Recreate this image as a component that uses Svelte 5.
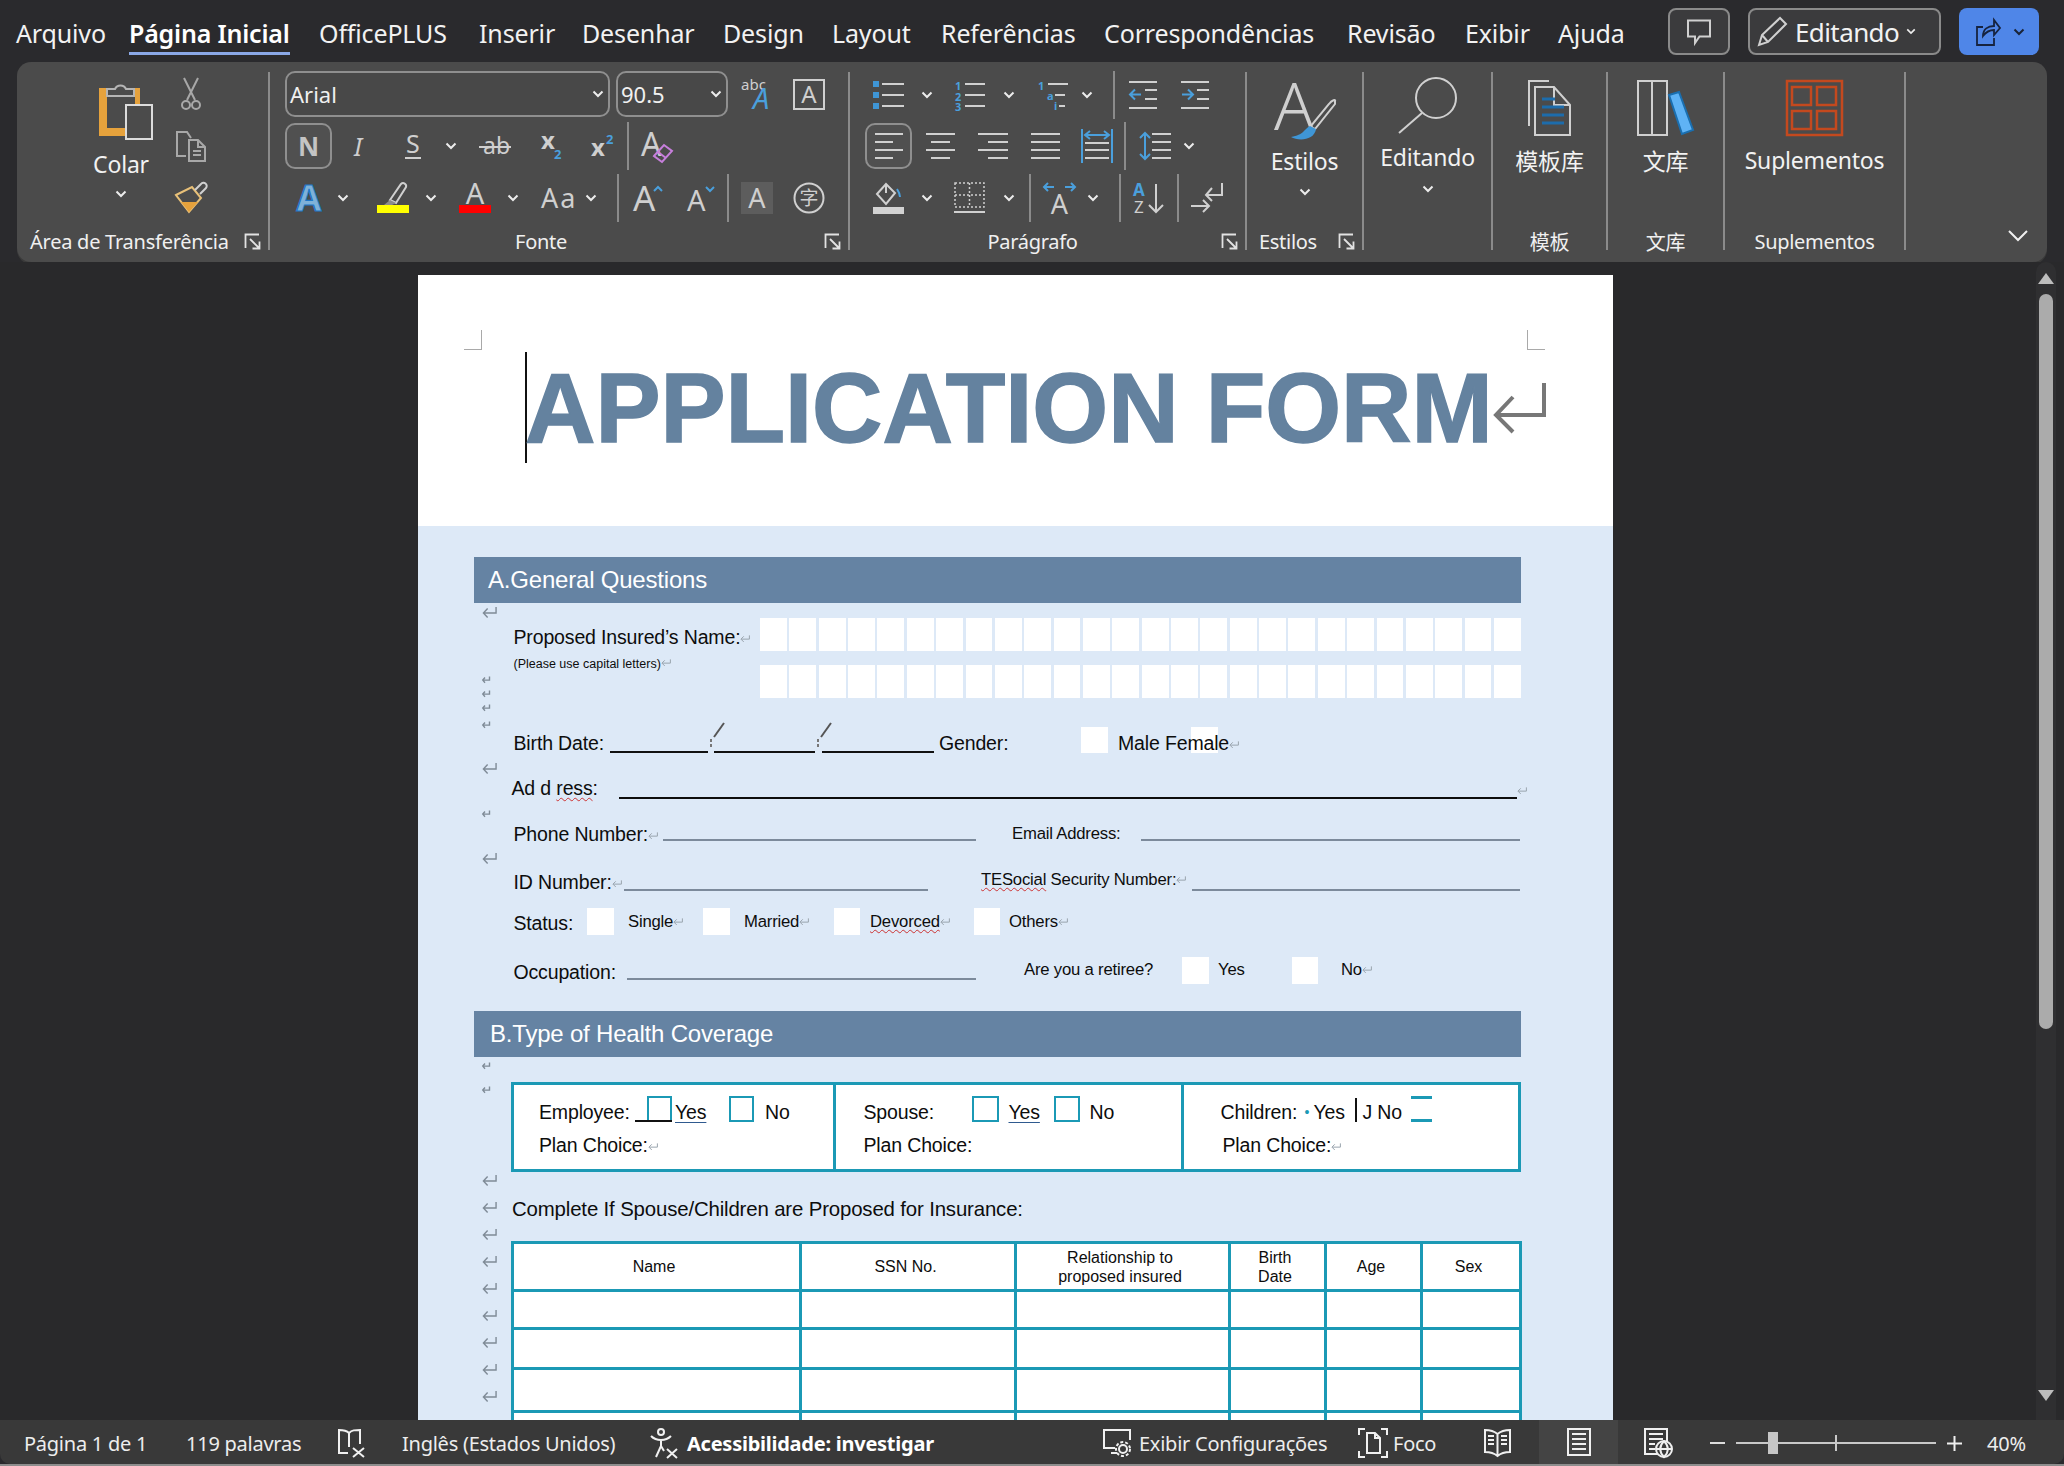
<script>
  const tabs = ['Arquivo', 'Página Inicial', 'OfficePLUS', 'Inserir', 'Desenhar', 'Design', 'Layout', 'Referências', 'Correspondências', 'Revisão', 'Exibir', 'Ajuda'];
  const cells = Array.from({ length: 26 }, (_, i) => i);

  function stack(y0, list) {
    let prev = y0;
    return list.map(([y, big]) => {
      const h = big ? 12 : 7;
      const w = big ? 15 : 8;
      const top = y - h / 2 - prev;
      prev = y + h / 2;
      return { h, w, top };
    });
  }
  const marksA = stack(602, [[611, 1], [678, 0], [692, 0], [706, 0], [723, 0], [767, 1], [812, 0], [857, 1]]);
  const marksB = stack(1057, [[1065, 0], [1089, 0], [1180, 1], [1207, 1], [1234, 1], [1261, 1], [1288, 1], [1315, 1], [1342, 1], [1369, 1], [1396, 1]]);
  const tableRows = [38, 40, 43, 40];
</script>

{#snippet chev()}
  <svg class="chev" width="12" height="8" viewBox="0 0 12 8"><path d="M1.5 1.5L6 6l4.5-4.5" /></svg>
{/snippet}
{#snippet launcher()}
  <svg class="launch" width="17" height="17" viewBox="0 0 17 17"><path d="M1.5 15V1.5H15M6 6l9.5 9.5M15.5 8.5v7H8.5" /></svg>
{/snippet}
{#snippet ret()}
  <svg class="ret" width="10" height="9" viewBox="0 0 16 12"><path d="M15 1v6H2M6 2.5L1.5 7 6 11.5" /></svg>
{/snippet}
{#snippet vsep()}
  <i class="vsep"></i>
{/snippet}

<div class="app">
  <header class="top">
    <nav class="tabs">
      {#each tabs as t, i}
        <span class="tab" class:active={i === 1}>{t}</span>
      {/each}
    </nav>
    <div class="actions">
      <div class="btn comment">
        <svg width="24" height="26" viewBox="0 0 24 26"><path class="s" d="M1 1.5h22v16H12.500L8 24v-6.500H1z" /></svg>
      </div>
      <div class="btn editing">
        <svg width="31" height="31" viewBox="0 0 31 31"><path class="s" d="M2 29l3-10L23 2l6 6-18 18zM5 19l6 7" /></svg>
        <span>Editando</span>
        <svg class="chev tiny" width="10" height="7" viewBox="0 0 12 8"><path d="M1.5 1.500L6 6l4.500-4.500" /></svg>
      </div>
      <div class="btn share">
        <svg width="26" height="30" viewBox="0 0 26 30"><path class="dk" d="M8 10H2v18h17v-7M8 19c0-7 5-10 11-10V3l6 8-6 7v-5c-5 0-8 2-11 6z" /></svg>
        {@render chev()}
      </div>
    </div>
  </header>

  <section class="ribbon">
    <div class="group g-clip">
      <div class="clip-body">
        <div class="large colar">
          <svg class="paste" width="54" height="60" viewBox="0 0 54 60">
            <path class="or" d="M0 8h8v40h24v8H0zM36 8h5v17h-5z" />
            <path class="clipt" d="M8 16V9h8a6 6 0 0 1 11 0h8v7z" />
            <rect class="paper" x="27" y="25" width="26" height="34" />
          </svg>
          <span class="big-label">Colar</span>
          {@render chev()}
        </div>
        <div class="clip-small">
          <svg width="20" height="32" viewBox="0 0 20 32"><path class="dim" d="M3 0l11 22M17 0L6 22" /><circle class="dim" cx="5" cy="27" r="4" /><circle class="dim" cx="15" cy="27" r="4" /></svg>
          <svg width="32" height="32" viewBox="0 0 32 32"><path class="dim" d="M11 26H2V2h10l4 6M14 10h9l7 7v14H14zM23 10v7h7M18 21h8M18 25h8" /></svg>
          <svg width="31" height="30" viewBox="0 0 31 30">
            <path class="brush" d="M0 13l16-8 9 11-12 14z" />
            <path class="or" d="M5 20h17l-9 10z" />
            <path class="s" d="M19 8l6-6a2.500 2.500 0 0 1 5 4l-6 6" />
          </svg>
        </div>
      </div>
      <div class="foot left-clip">Área de Transferência{@render launcher()}</div>
    </div>

    <div class="group g-font">
      <div class="rows">
        <div class="row r1 font-r1">
          <div class="combo"><span>Arial</span>{@render chev()}</div>
          <div class="combo"><span>90.5</span>{@render chev()}</div>
          <svg width="34" height="30" viewBox="0 0 34 30"><text class="t" x="0" y="11" font-size="15">abc</text><text class="bt it" x="12" y="30" font-size="29">A</text></svg>
          <svg width="32" height="31" viewBox="0 0 32 31"><rect class="s" x="1" y="1" width="30" height="29" /><text class="t" x="16" y="24" font-size="24" text-anchor="middle">A</text></svg>
        </div>
        <div class="row r2 font-r2">
          <div class="tog"><span class="bold-n">N</span></div>
          <svg width="12" height="24" viewBox="0 0 12 24"><text class="t it" x="0" y="22" font-size="25">I</text></svg>
          <svg width="16" height="26" viewBox="0 0 16 26"><text class="t" x="1" y="20" font-size="25">S</text><path class="s" d="M0 25h16" /></svg>
          {@render chev()}
          <svg width="32" height="24" viewBox="0 0 32 24"><text class="t" x="4" y="20" font-size="23">ab</text><path class="s" d="M0 13h32" /></svg>
          <svg width="22" height="28" viewBox="0 0 22 28"><text class="t strong" x="2" y="17" font-size="24">x</text><text class="bt strong" x="15" y="27" font-size="13">2</text></svg>
          <svg width="23" height="28" viewBox="0 0 23 28"><text class="t strong" x="0" y="24" font-size="24">x</text><text class="bt strong" x="15" y="12" font-size="13">2</text></svg>
          {@render vsep()}
          <svg width="34" height="32" viewBox="0 0 34 32"><text class="t" x="0" y="26" font-size="32">A</text><path class="pink" d="M13 26l10-11 8 6-10 11z M17 22l8 6" /></svg>
        </div>
        <div class="row r3 font-r3">
          <svg width="30" height="30" viewBox="0 0 30 30"><text class="outl" x="15" y="28" font-size="36" text-anchor="middle">A</text></svg>
          {@render chev()}
          <svg width="32" height="31" viewBox="0 0 32 31">
            <rect class="yl" x="0" y="23" width="32" height="8" />
            <path class="s" d="M13 18L24 2a3 3 0 0 1 5 3L19 21z" />
            <path class="mk" d="M13 18l6 3-4 2H7z" />
          </svg>
          {@render chev()}
          <svg width="32" height="31" viewBox="0 0 32 31"><text class="t" x="16" y="22" font-size="29" text-anchor="middle">A</text><rect class="rd" x="0" y="23" width="32" height="8" /></svg>
          {@render chev()}
          <svg width="33" height="22" viewBox="0 0 33 22"><text class="t" x="0" y="21" font-size="27" letter-spacing="2">Aa</text></svg>
          {@render chev()}
          {@render vsep()}
          <svg width="31" height="28" viewBox="0 0 31 28"><text class="t" x="0" y="27" font-size="35">A</text><path class="bs" d="M21 7l4-4 4 4" /></svg>
          <svg width="29" height="26" viewBox="0 0 29 26"><text class="t" x="0" y="26" font-size="29">A</text><path class="bs" d="M19 2l4 4 4-4" /></svg>
          {@render vsep()}
          <div class="shaded"><svg width="24" height="24" viewBox="0 0 24 24"><text class="t" x="12" y="22" font-size="27" text-anchor="middle">A</text></svg></div>
          <svg width="32" height="32" viewBox="0 0 32 32"><circle class="s" cx="16" cy="16" r="14.500" /><text class="t cjk" x="16" y="23" font-size="19" text-anchor="middle">字</text></svg>
        </div>
      </div>
      <div class="foot foot-font">Fonte{@render launcher()}</div>
    </div>

    <div class="group g-para">
      <div class="rows">
        <div class="row r1 para-r1">
          <svg width="31" height="30" viewBox="0 0 31 30"><path class="bf" d="M0 1h6v6H0zM0 12h6v6H0zM0 23h6v6H0z" /><path class="s" d="M9 4h22M9 15h22M9 26h22" /></svg>
          {@render chev()}
          <svg width="31" height="30" viewBox="0 0 31 30"><text class="bt strong" x="1" y="10" font-size="11">1</text><text class="bt strong" x="1" y="21" font-size="11">2</text><text class="bt strong" x="1" y="31" font-size="11">3</text><path class="s" d="M11 4h20M11 15h20M11 26h20" /></svg>
          {@render chev()}
          <svg width="31" height="30" viewBox="0 0 31 30"><text class="bt strong" x="1" y="10" font-size="11">1</text><text class="bt strong" x="10" y="20" font-size="11">a</text><text class="bt strong" x="17" y="30" font-size="11">i</text><path class="s" d="M11 4h20M18 15h10M22 26h6" /></svg>
          {@render chev()}
          {@render vsep()}
          <svg width="28" height="30" viewBox="0 0 28 30"><path class="s" d="M0 2h28M16 10h12M16 19h12M0 28h28" /><path class="b" d="M12 14.500H1M6 9.500l-5 5 5 5" /></svg>
          <svg width="28" height="30" viewBox="0 0 28 30"><path class="s" d="M0 2h28M16 10h12M16 19h12M0 28h28" /><path class="b" d="M1 14.500h11M7 9.500l5 5-5 5" /></svg>
        </div>
        <div class="row r2 para-r2">
          <div class="tog"><svg width="30" height="28" viewBox="0 0 30 28"><path class="s" d="M1 2h28M1 10h18M1 18h28M1 26h18" /></svg></div>
          <svg width="29" height="28" viewBox="0 0 29 28"><path class="s" d="M0 2h29M5 10h19M0 18h29M5 26h19" /></svg>
          <svg width="30" height="28" viewBox="0 0 30 28"><path class="s" d="M0 2h30M10 10h20M0 18h30M10 26h20" /></svg>
          <svg width="29" height="28" viewBox="0 0 29 28"><path class="s" d="M0 2h29M0 10h29M0 18h29M0 26h29" /></svg>
          <svg width="32" height="34" viewBox="0 0 32 34"><path class="b" d="M1 0v34M31 0v34M4 6h24M9 2L4 6l5 4M23 2l5 4-5 4" /><path class="s" d="M4 14h24M4 21h24M4 29h24" /></svg>
          {@render vsep()}
          <svg width="32" height="30" viewBox="0 0 32 30"><path class="b" d="M6 2v26M1 7l5-5 5 5M1 23l5 5 5-5" /><path class="s" d="M13 3h19M13 11h19M13 19h19M13 27h19" /></svg>
          {@render chev()}
        </div>
        <div class="row r3 para-r3">
          <svg width="31" height="32" viewBox="0 0 31 32"><path class="s" d="M4 12L13 2l9 9-9 11zM13 2v9" /><path class="b" d="M24 7c2 3 3 5 3 8" /><rect class="gr" x="0" y="25" width="31" height="7" /></svg>
          {@render chev()}
          <svg width="31" height="31" viewBox="0 0 31 31"><path class="dot" d="M1 1h29v24H1zM15.500 1v24M1 13h29" /><path class="s" d="M0 30h31" /></svg>
          {@render chev()}
          {@render vsep()}
          <svg width="33" height="32" viewBox="0 0 33 32"><path class="b" d="M1 5h10M5 1L1 5l4 4M22 5h10M28 1l4 4-4 4" /><text class="t" x="16.500" y="32" font-size="27" text-anchor="middle">A</text></svg>
          {@render chev()}
          {@render vsep()}
          <svg width="32" height="32" viewBox="0 0 32 32"><text class="bt strong" x="0" y="14" font-size="17">A</text><text class="t" x="1" y="31" font-size="17">Z</text><path class="s" d="M23 2v28M16 23l7 7 7-7" /></svg>
          {@render vsep()}
          <svg width="32" height="32" viewBox="0 0 32 32"><path class="s" d="M31 1v12H15M21 6l-6 7 6 6M0 24h18M12 18l6 6-6 6" /></svg>
        </div>
      </div>
      <div class="foot foot-para">Parágrafo{@render launcher()}</div>
    </div>

    <div class="group g-est">
      <div class="large top11">
        <svg class="estilos-ic" width="61" height="57" viewBox="0 0 61 57">
          <text class="t thin" x="-2" y="47" font-size="66">A</text>
          <path class="s" d="M59 18c1-2-3-1-6 3L34 44l5 2 20-25z" />
          <path class="bf" d="M34 43c-6 3-6 9-19 11 7 4 23 4 25-8z" />
        </svg>
        <span class="big-label">Estilos</span>
        {@render chev()}
      </div>
      <div class="foot foot-est">Estilos{@render launcher()}</div>
    </div>

    <div class="group g-edit">
      <div class="large top5">
        <svg width="60" height="57" viewBox="0 0 60 57"><circle class="s" cx="38" cy="21" r="20" /><path class="s" d="M24 36L1 56" /></svg>
        <span class="big-label">Editando</span>
        {@render chev()}
      </div>
      <div class="foot"></div>
    </div>

    <div class="group g-temp">
      <div class="large top8">
        <svg width="44" height="56" viewBox="0 0 44 56">
          <path class="s" d="M1 46V1h20M7 7h19l16 18v30H7zM26 7v18h16" />
          <path class="navy" d="M14 19h13M14 27h22M14 35h22M14 43h22" />
        </svg>
        <span class="big-label cjk">模板库</span>
      </div>
      <div class="foot cjk">模板</div>
    </div>

    <div class="group g-lib">
      <div class="large top8">
        <svg width="57" height="56" viewBox="0 0 57 56">
          <path class="s" d="M1 1h29v54H1zM15 1v54" />
          <path class="bk" d="M32 15l10-3 14 38-11 4z" />
        </svg>
        <span class="big-label cjk">文库</span>
      </div>
      <div class="foot cjk">文库</div>
    </div>

    <div class="group g-add">
      <div class="large top8">
        <svg width="57" height="56" viewBox="0 0 57 56">
          <path class="rs" d="M1 1h55v54H1zM6 7h19v18H6zM31 7h19v18H31zM6 31h19v18H6zM31 31h19v18H31z" />
        </svg>
        <span class="big-label">Suplementos</span>
      </div>
      <div class="foot">Suplementos</div>
    </div>

    <div class="collapse">
      <svg width="20" height="12" viewBox="0 0 20 12"><path class="wh" d="M1 1l9 9 9-9" /></svg>
    </div>
  </section>

  <main class="docarea">
    <article class="page">
      <div class="page-head">
        <i class="crop crop-l"></i>
        <i class="crop crop-r"></i>
        <div class="title-row">
          <h1>APPLICATION FORM</h1>
          <svg width="54" height="49" viewBox="0 0 54 49"><path class="bigret" d="M52 0v32H6M21 14L4 32l17 17" /></svg>
        </div>
      </div>

      <div class="blue">
        <h2 class="sec">A.General Questions</h2>
        <div class="sec-body">
          <div class="marks ma">
            {#each marksA as m}
              <svg class="mark" width={m.w} height={m.h} viewBox="0 0 16 12" preserveAspectRatio="none" style="margin-top:{m.top}px"><path d="M15 1v6H2M6 2.500L1.500 7 6 11.500" /></svg>
            {/each}
          </div>
          <div class="form">
            <div class="f-name">
              <span class="tx pt7">Proposed Insured’s Name:{@render ret()}</span>
              <div class="cells">{#each cells as c (c)}<i></i>{/each}</div>
            </div>
            <div class="f-name2">
              <span class="small">(Please use capital letters){@render ret()}</span>
              <div class="cells">{#each cells as c (c)}<i></i>{/each}</div>
            </div>
            <div class="fr f-birth">
              <span class="tx">Birth Date:</span>
              <div class="date">
                <i class="seg s1"></i>
                <span class="slash"><svg width="14" height="30" viewBox="0 0 14 30"><path d="M13 0L3 14" /><path class="tick" d="M0 16v8" /></svg></span>
                <i class="seg s2"></i>
                <span class="slash"><svg width="14" height="30" viewBox="0 0 14 30"><path d="M13 0L3 14" /><path class="tick" d="M0 16v8" /></svg></span>
                <i class="seg s3"></i>
              </div>
              <i></i>
              <span class="tx">Gender:</span>
              <i class="box"></i>
              <i></i>
              <span class="tx mf"><span>Male Female</span>{@render ret()}</span>
            </div>
            <div class="fr f-addr">
              <span class="tx addr">Ad d <u class="sq">ress</u>:</span>
              <i class="ln blk"></i>
              <span class="tx">{@render ret()}</span>
            </div>
            <div class="fr f-phone">
              <span class="tx">Phone Number:{@render ret()}</span>
              <i class="ln m3"></i>
              <i></i>
              <span class="tx sm">Email Address:</span>
              <i class="ln m3"></i>
            </div>
            <div class="fr f-id">
              <span class="tx lift1">ID Number:{@render ret()}</span>
              <i class="ln m2"></i>
              <i></i>
              <span class="tx sm lift3"><u class="sq">TESocial</u> Security Number:{@render ret()}</span>
              <i class="ln m2"></i>
            </div>
            <div class="fr f-status">
              <span class="tx lift2">Status:</span>
              <i class="box tall"></i><i></i>
              <span class="tx sm lift3">Single{@render ret()}</span>
              <i class="box tall"></i><i></i>
              <span class="tx sm lift3">Married{@render ret()}</span>
              <i class="box tall"></i><i></i>
              <span class="tx sm lift3"><u class="sq">Devorced</u>{@render ret()}</span>
              <i class="box tall"></i><i></i>
              <span class="tx sm lift3">Others{@render ret()}</span>
            </div>
            <div class="fr f-occ">
              <span class="tx lift2">Occupation:</span>
              <i class="ln m4"></i>
              <i></i>
              <span class="tx sm lift4">Are you a retiree?</span>
              <i class="box tall"></i><i></i>
              <span class="tx sm lift4">Yes</span>
              <i class="box tall"></i><i></i>
              <span class="tx sm lift4">No{@render ret()}</span>
            </div>
          </div>
        </div>

        <h2 class="sec sec-b">B.Type of Health Coverage</h2>
        <div class="sec-body">
          <div class="marks mb">
            {#each marksB as m}
              <svg class="mark" width={m.w} height={m.h} viewBox="0 0 16 12" preserveAspectRatio="none" style="margin-top:{m.top}px"><path d="M15 1v6H2M6 2.500L1.500 7 6 11.500" /></svg>
            {/each}
          </div>
          <div class="form">
            <div class="plans">
              <div class="plan p1">
                <div class="pr pr1">
                  <span class="tx">Employee:</span>
                  <span class="ub"><i class="chk"></i></span>
                  <i></i>
                  <u class="tx yes">Yes</u>
                  <i></i>
                  <i class="chk"></i>
                  <i></i>
                  <span class="tx">No</span>
                </div>
                <div class="tx pc">Plan Choice:{@render ret()}</div>
              </div>
              <div class="plan p2">
                <div class="pr pr2">
                  <span class="tx">Spouse:</span>
                  <i class="chk"></i>
                  <i></i>
                  <u class="tx yes">Yes</u>
                  <i></i>
                  <i class="chk"></i>
                  <i></i>
                  <span class="tx">No</span>
                </div>
                <div class="tx pc">Plan Choice:</div>
              </div>
              <div class="plan p3">
                <div class="pr pr3">
                  <span class="tx">Children:</span>
                  <span class="tx dotm">•</span>
                  <span class="tx">Yes</span>
                  <i class="caret"></i>
                  <span class="tx">J No</span>
                  <i class="dash"></i>
                </div>
                <div class="tx pc pc3">Plan Choice:{@render ret()}</div>
              </div>
            </div>
            <p class="tx complete">Complete If Spouse/Children are Proposed for Insurance:</p>
            <table class="tbl">
              <colgroup><col class="c1" /><col class="c2" /><col class="c3" /><col class="c4" /><col class="c5" /><col class="c6" /></colgroup>
              <thead>
                <tr>
                  <th>Name</th><th>SSN No.</th><th>Relationship to<br />proposed insured</th><th>Birth<br />Date</th><th>Age</th><th>Sex</th>
                </tr>
              </thead>
              <tbody>
                {#each tableRows as h}
                  <tr style="height:{h}px"><td></td><td></td><td></td><td></td><td></td><td></td></tr>
                {/each}
              </tbody>
            </table>
          </div>
        </div>
      </div>
    </article>

    <aside class="scroll">
      <i class="arrow up"></i>
      <i class="thumb"></i>
      <i class="arrow down"></i>
    </aside>
  </main>

  <footer class="status">
    <span>Página 1 de 1</span>
    <span>119 palavras</span>
    <svg width="29" height="30" viewBox="0 0 29 30"><path class="wh1" d="M10 25H1V2c4 0 7 0 10 3 3-3 6-3 11-3v14M11 5v14M15 20l11 9M26 20l-11 9" /></svg>
    <span>Inglês (Estados Unidos)</span>
    <svg width="29" height="31" viewBox="0 0 29 31"><circle class="wh1" cx="11" cy="4" r="3" /><path class="wh1" d="M1 8c3 3 6 4 10 4s7-1 10-4M11 12v6M11 18l-5 11M11 18l3 5M17 21l10 9M27 21L17 30" /></svg>
    <b>Acessibilidade: investigar</b>
    <svg width="29" height="30" viewBox="0 0 29 30"><path class="wh1" d="M12 20H1V2h26v10M8 25h6" /><circle class="wh1" cx="20" cy="21" r="4" /><circle class="wh1 dashc" cx="20" cy="21" r="7" /></svg>
    <span>Exibir Configurações</span>
    <svg width="30" height="30" viewBox="0 0 30 30"><path class="wh1" d="M1 7V1h6M23 1h6v6M1 23v6h6M29 23v6h-6M9 5h8l5 5v15H9zM17 5v5h5" /></svg>
    <span>Foco</span>
    <svg width="27" height="28" viewBox="0 0 27 28"><path class="wh1" d="M13.500 5C10 2 6 1 1 1v22c5 0 9 1 12.500 4 3.500-3 7.500-4 12.500-4V1c-5 0-9 1-12.500 4zM13.500 5v22M4 7h6M4 11h6M4 15h6M17 7h6M17 11h6M17 15h6" /></svg>
    <div class="st-active"><svg width="24" height="28" viewBox="0 0 24 28"><path class="wh1" d="M1 1h22v26H1zM5 6h14M5 11h14M5 16h14M5 21h14" /></svg></div>
    <svg width="29" height="30" viewBox="0 0 29 30"><path class="wh1" d="M14 26H1V1h22v12M5 6h14M5 11h14M5 16h6M5 21h6" /><circle class="wh1" cx="20" cy="21" r="8" /><path class="wh1" d="M12 21h16M20 13c-5 5-5 11 0 16 5-5 5-11 0-16" /></svg>
    <i class="st-minus"></i>
    <div class="slider"><i class="knob"></i><i class="mid"></i></div>
    <svg width="15" height="15" viewBox="0 0 15 15"><path class="wh1" d="M0 7.500h15M7.500 0v15" /></svg>
    <span>40%</span>
  </footer>
  <div class="edge"></div>
</div>

<style>
  :global(body) { margin: 0; background: #2a2a2c; }
  .app {
    width: 2064px; height: 1466px; display: flex; flex-direction: column; overflow: hidden;
    background: #2a2a2d; font-family: "Noto Sans", "Noto Sans CJK SC", sans-serif; color: #f2f2f2;
  }
  i { display: block; font-style: normal; }
  svg { display: block; overflow: visible; }
  svg text { font-family: "Noto Sans", "Noto Sans CJK SC", sans-serif; }

  /* top bar */
  .top { height: 62px; flex: none; display: flex; }
  .tabs {
    display: grid; width: 1668px; box-sizing: border-box; padding-left: 16px; height: 55px;
    grid-template-columns: 113px 190px 160px 103px 141px 109px 109px 163px 243px 118px 93px 1fr;
  }
  .tab { font-size: 25px; height: 55px; padding-top: 11px; box-sizing: border-box; white-space: nowrap; justify-self: start; letter-spacing: -0.15px; line-height: 44px; }
  .tab.active { font-weight: 600; color: #fff; border-bottom: 3px solid #8aa8e6; width: 161px; letter-spacing: -0.2px; }
  .actions { display: flex; align-items: flex-start; padding-top: 8px; gap: 18px; }
  .btn { height: 47px; box-sizing: border-box; border-radius: 8px; display: flex; align-items: center; }
  .comment { width: 62px; border: 2px solid #8a8a8a; background: #3b3b3d; justify-content: center; }
  .editing { width: 193px; border: 2px solid #8a8a8a; background: #3b3b3d; padding-left: 7px; font-size: 26px; gap: 7px; }
  .editing span { letter-spacing: -0.6px; }
  .share { width: 80px; background: #4f86e8; padding-left: 16px; gap: 12px; }
  .share .chev path { stroke: #1a2438; }
  .s { fill: none; stroke: #d0d0d0; stroke-width: 2; }
  .dk { fill: none; stroke: #16233f; stroke-width: 1.8; }

  /* ribbon */
  .ribbon {
    flex: none; margin-left: 17px; width: 2030px; height: 200px; box-sizing: border-box; background: #4b4b4b;
    border-radius: 14px; display: flex; padding: 10px 0 12px; box-shadow: 0 2px 0 #3a3a3a;
  }
  .group { box-sizing: border-box; border-right: 2px solid #8b8b8b; display: flex; flex-direction: column; height: 178px; flex: none; }
  .g-clip { width: 253px; }
  .g-font { width: 580px; }
  .g-para { width: 397px; }
  .g-est { width: 117px; }
  .g-edit { width: 129px; }
  .g-temp { width: 115px; }
  .g-lib { width: 117px; }
  .g-add { width: 181px; }
  .foot {
    height: 16px; line-height: 16px; font-size: 20px; text-align: center; position: relative; flex: none; margin-top: auto;
    white-space: nowrap; color: #f0f0f0; letter-spacing: -0.3px;
  }
  .launch { position: absolute; right: 7px; bottom: 0; }
  .launch path { fill: none; stroke: #e2e2e2; stroke-width: 1.8; }
  .left-clip { text-align: left; padding-left: 13px; letter-spacing: -0.25px; }
  .foot-font { padding-right: 36px; }
  .foot-para { padding-right: 30px; }
  .foot-est { text-align: left; padding-left: 12px; }
  .chev { flex: none; }
  .chev path { fill: none; stroke: #ececec; stroke-width: 2; }
  .clip-body { display: flex; padding-left: 60px; }
  .large { display: flex; flex-direction: column; align-items: center; }
  .colar { width: 88px; padding-top: 8px; }
  .paste { margin-left: 10px; }
  .colar .big-label { margin-top: 12px; }
  .colar .chev { margin-top: 14px; }
  .big-label { font-size: 23px; line-height: 24px; white-space: nowrap; letter-spacing: -0.2px; }
  .clip-small { display: flex; flex-direction: column; align-items: center; width: 32px; margin-left: 10px; padding-top: 6px; gap: 20px; }
  .or { fill: #e6a23c; stroke: none; }
  .clipt { fill: #4b4b4b; stroke: #b5b5b5; stroke-width: 2; }
  .paper { fill: #4b4b4b; stroke: #dcdcdc; stroke-width: 2; }
  .dim { fill: none; stroke: #a8a8a8; stroke-width: 2; }
  .brush { fill: none; stroke: #e8c078; stroke-width: 2; }
  .t { fill: #cfcfcf; }
  .bt { fill: #4a9fdc; }
  .it { font-style: italic; }
  .strong { font-weight: 700; }
  .thin { font-weight: 300; }
  .b { fill: none; stroke: #4a9fdc; stroke-width: 2; }
  .bs { fill: none; stroke: #4a9fdc; stroke-width: 2; }
  .bf { fill: #3f96d6; }
  .pink { fill: none; stroke: #c77fdc; stroke-width: 2; }
  .yl { fill: #ffff00; }
  .rd { fill: #ff0000; }
  .mk { fill: #8c8c8c; }
  .gr { fill: #d2d2d2; }
  .dot { fill: none; stroke: #cfcfcf; stroke-width: 1.5; stroke-dasharray: 2 2; }
  .outl { fill: #7fb2d8; stroke: #1e78c8; stroke-width: 1.2; font-weight: 700; }
  .navy { fill: none; stroke: #1d6cab; stroke-width: 3; }
  .bk { fill: #5fb3f5; stroke: #1a6fb0; stroke-width: 2; }
  .rs { fill: none; stroke: #c4491e; stroke-width: 2.5; }
  .wh { fill: none; stroke: #f0f0f0; stroke-width: 2; }
  .cjk { font-family: "Noto Sans CJK SC", sans-serif; }
  .estilos-ic { margin-left: 4px; }

  .rows { padding-left: 15px; margin-top: -1px; display: flex; flex-direction: column; }
  .row { display: grid; align-items: center; }
  .row > :global(*) { justify-self: end; }
  .r1 { height: 46px; }
  .r2 { height: 47px; margin-top: 5px; }
  .r3 { height: 49px; margin-top: 4px; }
  .font-r1 { grid-template-columns: 325px 118px 47px 50px; }
  .font-r2 { grid-template-columns: 47px 34px 55px 36px 54px 50px 53px 15px 46px; }
  .font-r3 { grid-template-columns: 39px 25px 60px 28px 54px 28px 55px 23px 22px 45px 52px 13px 44px 52px; }
  .para-r1 { grid-template-columns: 39px 29px 52px 30px 53px 25px 22px 42px 52px; }
  .para-r2 { grid-template-columns: 47px 43px 53px 52px 53px 13px 45px 24px; }
  .para-r3 { grid-template-columns: 39px 29px 52px 30px 16px 45px 23px 22px 44px 14px 44px; }
  .vsep { width: 2px; height: 48px; background: #8b8b8b; }
  .combo {
    box-sizing: border-box; height: 46px; width: 100%; border: 2px solid #8f8f8f; border-radius: 10px; display: flex; align-items: center;
    justify-content: space-between; padding: 0 4px 0 3px; font-size: 22px; color: #f0f0f0; background: #484848;
  }
  .combo + .combo { width: 112px; }
  .tog {
    box-sizing: border-box; width: 47px; height: 46px; border: 2px solid #8f8f8f; border-radius: 10px; display: flex; align-items: center; justify-content: center; background: #505050;
  }
  .bold-n { font-size: 26px; font-weight: 700; color: #c4c4c4; }
  .shaded { width: 32px; height: 32px; background: #5d5d5d; display: flex; align-items: center; justify-content: center; }
  .top11 { padding-top: 11px; }
  .top11 .big-label { margin-top: 9px; }
  .top11 .chev { margin-top: 15px; }
  .top5 { padding-top: 5px; }
  .top5 .big-label { margin-top: 11px; }
  .top5 .chev { margin-top: 16px; }
  .top8 { padding-top: 8px; }
  .top8 .big-label { margin-top: 12px; }
  .collapse { margin-left: 102px; padding-top: 158px; }

  /* document */
  .docarea { flex: 1; min-height: 0; display: flex; overflow: hidden; padding-top: 13px; background: #29292b; }
  .page { flex: none; width: 1195px; margin-left: 418px; background: #fff; overflow: hidden; color: #0d0d0d; font-family: "Liberation Sans", Arial, sans-serif; }
  .page-head { height: 251px; box-sizing: border-box; padding-top: 77px; position: relative; }
  .crop { position: absolute; width: 17px; height: 19px; top: 55px; border-bottom: 1px solid #a9a9a9; }
  .crop-l { left: 46px; border-right: 1px solid #a9a9a9; }
  .crop-r { left: 1109px; border-left: 1px solid #a9a9a9; }
  .title-row { display: flex; align-items: center; margin-left: 107px; height: 111px; border-left: 2px solid #111; }
  h1 { margin: 0 0 0 -2px; padding-top: 1px; font-size: 97.5px; line-height: 109px; font-weight: 700; color: #64829f; white-space: nowrap; -webkit-text-stroke: 1.5px #64829f; }
  .title-row svg { margin-left: -1px; }
  .bigret { fill: none; stroke: #777; stroke-width: 4; }
  .blue { background: #dde9f7; padding: 31px 92px 0 56px; height: 900px; box-sizing: border-box; }
  .sec { margin: 0; height: 46px; background: #6583a3; color: #fff; font-size: 24px; font-weight: 400; line-height: 46px; padding-left: 14px; letter-spacing: -0.2px; }
  .sec-b { margin-top: 27px; padding-left: 16px; }
  .sec-body { display: flex; }
  .marks { flex: none; display: flex; flex-direction: column; padding-left: 8px; box-sizing: border-box; }
  .ma { width: 39.5px; }
  .mb { width: 37px; }
  .mark path { fill: none; stroke: #7f8b97; stroke-width: 1.4; vector-effect: non-scaling-stroke; }
  .form { flex: 1; min-width: 0; }
  .tx { font-size: 19.5px; line-height: 20px; white-space: nowrap; letter-spacing: -0.15px; }
  .sm { font-size: 16.7px; letter-spacing: -0.2px; }
  .ret { display: inline-block; vertical-align: 1px; }
  .ret path { fill: none; stroke: #9aa4ae; stroke-width: 1.6; }
  .pt7 { padding-top: 9px; }
  .f-name { display: grid; grid-template-columns: 246.5px 1fr; height: 33px; margin-top: 15px; }
  .f-name2 { display: grid; grid-template-columns: 246.5px 1fr; height: 33px; margin-top: 14px; }
  .small { font-size: 12.5px; line-height: 14px; margin-top: -8px; white-space: nowrap; }
  .cells { display: flex; gap: 2.500px; }
  .cells i { flex: 1; background: #fff; }
  .fr { display: grid; align-items: end; }
  .f-birth { height: 26px; margin-top: 29px; grid-template-columns: 96.5px 324px 5px 142px 27px 10px auto; }
  .f-addr { height: 20px; margin-top: 25px; grid-template-columns: 105.5px 898px auto; }
  .f-phone { height: 20px; margin-top: 26px; grid-template-columns: 149.5px 313px 36px 129px 379px; }
  .f-id { height: 20px; margin-top: 26px; grid-template-columns: 110.5px 304px 53px 211px 328px; }
  .f-status { height: 27px; margin-top: 18px; grid-template-columns: 73.5px 27px 14px 75px 27px 14px 90px 26px 10px 104px 26px 9px auto; }
  .f-occ { height: 27px; margin-top: 22px; grid-template-columns: 113.5px 349px 48px 158px 27px 9px 74px 26px 23px auto; }
  .box { background: #fff; height: 26px; }
  .box.tall { height: 27px; }
  .date { display: flex; height: 20px; align-items: flex-end; }
  .seg { height: 2px; background: #111; }
  .s1 { width: 98px; }
  .s2 { width: 101px; }
  .s3 { width: 112px; }
  .slash { width: 6px; height: 20px; position: relative; }
  .s2 + .slash { width: 7px; }
  .slash svg { position: absolute; left: 3px; top: -10px; }
  .slash path { fill: none; stroke: #555; stroke-width: 2; }
  .slash .tick { stroke: #777; stroke-dasharray: 3 2; }
  .mf { position: relative; }
  .mf::before { content: ""; position: absolute; left: 73px; bottom: 0; width: 27px; height: 26px; background: #fff; }
  .mf span { position: relative; }
  .mf :global(.ret) { position: relative; }
  .addr { margin-left: -2px; margin-bottom: 1px; }
  .sq { text-decoration: underline wavy #c33 1px; text-underline-offset: 2px; }
  .ln { height: 2px; background: #7c8a9b; }
  .ln.blk { background: #0d0d0d; }
  .m2 { margin-bottom: 2px; }
  .m3 { margin-bottom: 3px; }
  .m4 { margin-bottom: 4px; }
  .lift1 { margin-bottom: 1px; }
  .lift2 { margin-bottom: 2px; }
  .lift3 { margin-bottom: 3px; }
  .lift4 { margin-bottom: 4px; }

  .plans {
    margin-top: 25px; height: 90px; box-sizing: border-box; border: 3px solid #1b99b5; background: #fff;
    display: grid; grid-template-columns: 321.5px 348px 1fr;
  }
  .plan { border-right: 3px solid #1b99b5; padding-top: 11px; box-sizing: border-box; }
  .plan:last-child { border-right: 0; }
  .p1 { padding-left: 25px; }
  .p2 { padding-left: 28px; }
  .p3 { padding-left: 37px; }
  .pr { display: grid; align-items: end; height: 26px; }
  .pr1 { grid-template-columns: 96px 37px 3px 33px 21px 25px 11px auto; }
  .pr2 { grid-template-columns: 108px 27px 10px 31px 14px 26px 10px auto; }
  .pr3 { grid-template-columns: 84px 9px 41px 8px 48px 21px; }
  .chk { height: 26px; box-sizing: border-box; border: 2.500px solid #1b99b5; }
  .ub { display: flex; justify-content: flex-end; border-bottom: 2px solid #111; height: 26px; box-sizing: border-box; }
  .ub .chk { width: 25px; height: 24px; border-bottom: 0; }
  .yes { text-decoration-color: #2f5a8f; text-underline-offset: 3px; }
  .pc { margin-top: 13px; }
  .pc3 { margin-left: 2px; }
  .dotm { color: #1b99b5; font-size: 14px; }
  .caret { width: 2px; height: 24px; background: #111; }
  .dash { height: 26px; box-sizing: border-box; border-top: 3px solid #1b99b5; border-bottom: 3px solid #1b99b5; }
  .complete { margin: 25px 0 0 1px; height: 24px; line-height: 24px; font-size: 20.4px; }
  .tbl { margin-top: 20px; width: 1008px; table-layout: fixed; border-collapse: collapse; background: #fff; }
  .c1 { width: 288px; }
  .c2 { width: 215px; }
  .c3 { width: 214px; }
  .c4 { width: 96px; }
  .c5 { width: 96px; }
  .c6 { width: 99px; }
  .tbl th, .tbl td { border: 3px solid #1b99b5; padding: 0; }
  .tbl th { height: 45px; font-size: 16px; font-weight: 400; line-height: 19px; padding-right: 5px; }

  .scroll { flex: none; width: 20px; margin-left: 423px; margin-top: -13px; padding-top: 13px; display: flex; flex-direction: column; align-items: center; background: #2f2f31; border-radius: 10px 10px 0 0; }
  .thumb { width: 14px; height: 735px; background: #ababab; border-radius: 7px; margin-top: 10px; }
  .arrow { width: 0; height: 0; border-left: 8px solid transparent; border-right: 8px solid transparent; }
  .up { border-bottom: 11px solid #bdbdbd; margin-top: -2px; }
  .down { border-top: 11px solid #bdbdbd; margin-top: 361px; }

  /* status bar */
  .status {
    flex: none; height: 44px; background: #393939; box-sizing: border-box; padding: 2px 0 0 24px; display: grid; align-items: center;
    grid-template-columns: 162px 152px 64px 248px 37px 416px 36px 219px 35px 91px 55px 105px 66px 26px 211px 40px auto;
    font-size: 20px; white-space: nowrap; color: #ededed; letter-spacing: -0.25px; border-radius: 0 0 10px 10px;
  }
  .status b { font-weight: 700; color: #fff; letter-spacing: -0.25px; }
  .wh1 { fill: none; stroke: #f0f0f0; stroke-width: 2; }
  .dashc { stroke-dasharray: 3 2; }
  .st-active { width: 79px; height: 44px; margin-top: -2px; background: #444; display: flex; align-items: center; justify-content: center; margin-right: -24px; }
  .st-minus { width: 15px; height: 2px; background: #ddd; }
  .slider { width: 200px; height: 2.500px; background: #c9c9c9; position: relative; }
  .knob { position: absolute; left: 32px; top: -10px; width: 10px; height: 22px; background: #c6c6c6; }
  .mid { position: absolute; left: 99px; top: -7px; width: 2px; height: 16px; background: #c9c9c9; }
  .edge { flex: none; height: 2px; background: #8d8d8d; }
</style>
